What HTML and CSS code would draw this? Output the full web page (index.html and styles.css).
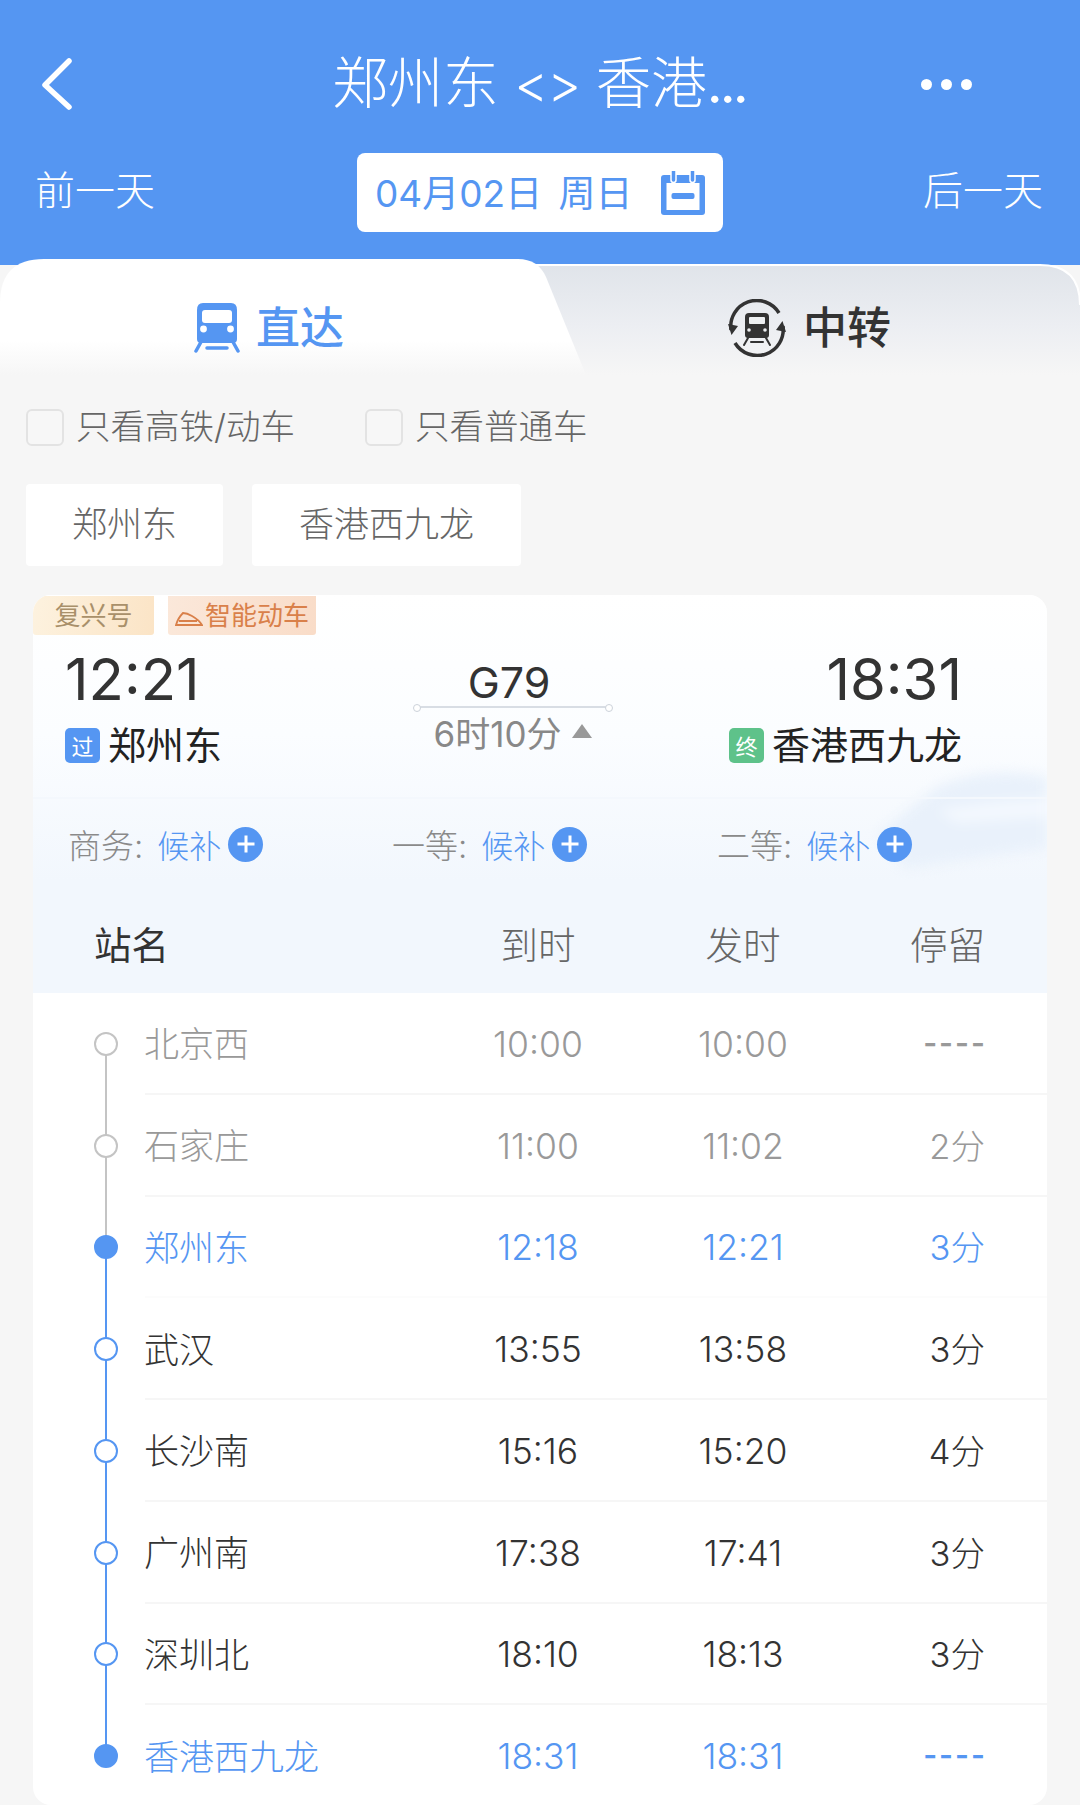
FILE: index.html
```html
<!DOCTYPE html>
<html lang="zh-CN">
<head>
<meta charset="utf-8">
<title>G79</title>
<link rel="stylesheet" href="styles.css">
</head>
<body>
<div class="page">
  <header class="header">
    <div class="nav">
      <svg class="back" viewBox="0 0 34 52"><path d="M29 3 L5 27 L29 49" /></svg>
      <div class="title">郑州东 <span class="arrows">&lt;&gt;</span> 香港<span class="ell">...</span></div>
      <div class="more"><i></i><i></i><i></i></div>
    </div>
    <div class="dates">
      <span class="day">前一天</span>
      <div class="date-pill">
        <span class="date-text">04月02日 周日</span>
        <svg class="cal" viewBox="0 0 44 44">
          <rect x="0" y="4" width="44" height="40" rx="3" class="b"/>
          <rect x="5.500" y="12" width="33" height="27" class="w"/>
          <path d="M10 0v9a2.500 2.500 0 0 0 5 0V0 M34 0v9a2.500 2.500 0 0 1-5 0V0" class="ring"/>
          <rect x="10.500" y="22" width="23" height="6" rx="2" class="b"/>
        </svg>
      </div>
      <span class="day">后一天</span>
    </div>
  </header>

  <div class="tabs">
    <svg class="tab-bg" viewBox="0 0 1080 116">
      <defs>
        <linearGradient id="tr" x1="0" y1="0" x2="0" y2="1">
          <stop offset="0" stop-color="#e0e4ea"/><stop offset=".55" stop-color="#eceef2"/><stop offset="1" stop-color="#f6f6f6"/>
        </linearGradient>
        <linearGradient id="tl" x1="0" y1="0" x2="0" y2="1">
          <stop offset="0" stop-color="#ffffff"/><stop offset=".7" stop-color="#ffffff"/><stop offset="1" stop-color="#f6f6f6"/>
        </linearGradient>
      </defs>
      <path d="M520 6H1040Q1080 6 1080 46V116H520Z" fill="url(#tr)"/>
      <path d="M520 6H1040Q1080 6 1080 46" fill="none" stroke="#fff" stroke-width="2"/>
      <path d="M0 116V44Q0 0 44 0H518Q538 0 546 18L586 116Z" fill="url(#tl)"/>
    </svg>
    <div class="tab tab-on">
      <svg class="ic-train" viewBox="0 0 46 50">
        <path d="M9 0H37Q43 0 43 7V36Q43 40 39 40H7Q3 40 3 36V7Q3 0 9 0Z" class="fb"/>
        <rect x="8" y="7" width="30" height="13" rx="3" fill="#fff"/>
        <circle cx="9.500" cy="26" r="3.400" fill="#fff"/><circle cx="36.500" cy="26" r="3.400" fill="#fff"/>
        <path d="M7 39L2 48M39 39L44 48M13 45H33" class="sb"/>
      </svg>
      <span>直达</span>
    </div>
    <div class="tab tab-off">
      <svg class="ic-transfer" viewBox="0 0 58 58">
        <path d="M3 31A26 26 0 0 1 51 14" class="sd"/>
        <path d="M55 27A26 26 0 0 1 7 44" class="sd"/>
        <path d="M0 25L3.500 36L10 27Z M58 33L54.500 22L48 31Z" fill="#333"/>
        <path d="M21 14H37Q41 14 41 18V36Q41 39 38 39H20Q17 39 17 36V18Q17 14 21 14Z" fill="#333"/>
        <rect x="21" y="18" width="16" height="7" rx="1" fill="#eef0f2"/>
        <circle cx="21" cy="31" r="1.800" fill="#eef0f2"/><circle cx="37" cy="31" r="1.800" fill="#eef0f2"/>
        <path d="M20 39L16 46M38 39L42 46M23 43H35" class="sd2"/>
      </svg>
      <span>中转</span>
    </div>
  </div>

  <div class="filters">
    <label class="check check-a"><i></i><span>只看高铁/动车</span></label>
    <label class="check"><i></i><span>只看普通车</span></label>
  </div>

  <div class="chips">
    <span class="chip chip-a">郑州东</span>
    <span class="chip chip-b">香港西九龙</span>
  </div>

  <section class="card">
    <div class="summary">
      <svg class="wave" viewBox="0 0 170 110">
        <path d="M0 70L60 22Q110 0 170 12V84Q110 90 30 104Z" fill="#e9f1fb"/>
        <path d="M60 45Q110 36 170 34V52Q120 56 80 58Z" fill="#f3f8fe"/>
      </svg>
      <div class="divider"></div>
      <div class="badges">
        <span class="badge badge-fx">复兴号</span>
        <span class="badge badge-zn">
          <svg class="ic-bullet" viewBox="0 0 28 14"><path d="M1 13H27Q24 8 17 4Q12 1 8 1Q3 6 1 13ZM4 9H22" /></svg>智能动车
        </span>
      </div>
      <div class="trip">
        <div class="end">
          <div class="time">12:21</div>
          <div class="st"><b class="tag tag-pass">过</b><span>郑州东</span></div>
        </div>
        <div class="mid">
          <div class="no">G79</div>
          <div class="rule"></div>
          <div class="dur"><span>6时10分</span><i class="tri"></i></div>
        </div>
        <div class="end end-r">
          <div class="time">18:31</div>
          <div class="st"><b class="tag tag-end">终</b><span>香港西九龙</span></div>
        </div>
      </div>
      <div class="seats">
        <div class="seat"><span class="k">商务:</span><span class="v">候补</span><i class="plus"></i></div>
        <div class="seat"><span class="k">一等:</span><span class="v">候补</span><i class="plus"></i></div>
        <div class="seat"><span class="k">二等:</span><span class="v">候补</span><i class="plus"></i></div>
      </div>
      <div class="thead">
        <span class="th-name">站名</span>
        <span class="c-a">到时</span>
        <span class="c-d">发时</span>
        <span class="c-s">停留</span>
      </div>
    </div>

    <div class="rows">
      <div class="row past"><div class="track"><i class="dot"></i></div><div class="cells"><span class="name">北京西</span><span class="c-a">10:00</span><span class="c-d">10:00</span><span class="c-s dash">----</span></div></div>
      <div class="row past"><div class="track"><i class="dot"></i></div><div class="cells"><span class="name">石家庄</span><span class="c-a">11:00</span><span class="c-d">11:02</span><span class="c-s">2分</span></div></div>
      <div class="row cur"><div class="track"><i class="dot"></i></div><div class="cells flat"><span class="name">郑州东</span><span class="c-a">12:18</span><span class="c-d">12:21</span><span class="c-s">3分</span></div></div>
      <div class="row"><div class="track"><i class="dot"></i></div><div class="cells"><span class="name">武汉</span><span class="c-a">13:55</span><span class="c-d">13:58</span><span class="c-s">3分</span></div></div>
      <div class="row"><div class="track"><i class="dot"></i></div><div class="cells"><span class="name">长沙南</span><span class="c-a">15:16</span><span class="c-d">15:20</span><span class="c-s">4分</span></div></div>
      <div class="row"><div class="track"><i class="dot"></i></div><div class="cells"><span class="name">广州南</span><span class="c-a">17:38</span><span class="c-d">17:41</span><span class="c-s">3分</span></div></div>
      <div class="row"><div class="track"><i class="dot"></i></div><div class="cells"><span class="name">深圳北</span><span class="c-a">18:10</span><span class="c-d">18:13</span><span class="c-s">3分</span></div></div>
      <div class="row cur last"><div class="track"><i class="dot"></i></div><div class="cells flat"><span class="name">香港西九龙</span><span class="c-a">18:31</span><span class="c-d">18:31</span><span class="c-s dash">----</span></div></div>
    </div>
  </section>
</div>
</body>
</html>
```
FILE: styles.css
```css
* { box-sizing: border-box; }
html, body { margin: 0; padding: 0; }
body {
  width: 1080px;
  height: 1805px;
  overflow: hidden;
  background: #f6f6f6;
  font-family: Inter, "Noto Sans CJK SC", sans-serif;
  color: #333;
}
i, b { font-style: normal; font-weight: 400; }

.page { width: 1080px; height: 1805px; overflow: hidden; }

/* header */
.header { background: #5596f2; height: 265px; color: #fff; }
.nav {
  height: 140px;
  padding: 28px 108px 0 40px;
  display: grid;
  grid-template-columns: 1fr auto 1fr;
  align-items: center;
}
.back { width: 34px; height: 52px; fill: none; stroke: #fff; stroke-width: 5.500; stroke-linecap: round; stroke-linejoin: round; }
.title { font-size: 55.500px; line-height: 70px; white-space: nowrap; font-weight: 300; margin-left: 66px; }
.arrows { font-size: 52px; letter-spacing: -1px; }
.ell { letter-spacing: -3px; font-weight: 400; }
.more { display: flex; gap: 9px; justify-self: end; }
.more i { width: 11px; height: 11px; border-radius: 50%; background: #fff; }

.dates {
  margin-top: 13px;
  height: 79px;
  padding: 0 37px 0 35px;
  display: flex;
  align-items: center;
  justify-content: space-between;
}
.day { font-size: 40px; line-height: 50px; font-weight: 300; margin-bottom: 4px; }
.date-pill {
  width: 366px;
  height: 79px;
  margin-left: 2px;
  background: #fff;
  border-radius: 8px;
  color: #5596f2;
  font-size: 37px;
  padding: 0 18px;
  display: flex;
  align-items: center;
  justify-content: space-between;
}
.date-text { word-spacing: 6px; margin-bottom: 4px; white-space: nowrap; }
.cal { width: 44px; height: 44px; }
.cal .b { fill: #5596f2; }
.cal .w { fill: #fff; }
.cal .ring { fill: #5596f2; stroke: #fff; stroke-width: 1.500; }

/* tabs */
.tabs {
  margin-top: -6px;
  height: 116px;
  position: relative;
  display: flex;
  padding-top: 21px;
}
.tab-bg { position: absolute; left: 0; top: 0; width: 1080px; height: 116px; }
.tab {
  position: relative;
  height: 90px;
  display: flex;
  align-items: center;
  font-size: 44px;
  font-weight: 500;
}
.tab-on { width: 580px; padding-left: 194px; color: #5596f2; gap: 16px; }
.tab-off { flex: 1; padding-left: 148px; color: #333; gap: 17px; }
.ic-train { width: 46px; height: 50px; margin-top: 6px; }
.fb { fill: #5596f2; }
.sb { fill: none; stroke: #5596f2; stroke-width: 3.500; stroke-linecap: round; }
.ic-transfer { width: 58px; height: 58px; margin-top: 6px; }
.sd { fill: none; stroke: #333; stroke-width: 3.500; }
.sd2 { fill: none; stroke: #333; stroke-width: 2; stroke-linecap: round; }

/* filters */
.filters {
  margin-top: 31px;
  padding-left: 26px;
  height: 42px;
  display: flex;
  align-items: center;
  color: #666;
  font-size: 34.500px;
}
.check { display: flex; align-items: center; gap: 12px; }
.check i {
  width: 38px;
  height: 37px;
  border: 2px solid #e3e3e3;
  border-radius: 6px;
  background: #f7f7f7;
}
.check span { line-height: 42px; font-weight: 300; }
.check-a { margin-right: 70px; }

/* chips */
.chips { margin-top: 36px; padding-left: 26px; display: flex; gap: 29px; }
.chip {
  height: 82px;
  padding-bottom: 7px;
  background: #fff;
  border-radius: 4px;
  font-size: 35px;
  font-weight: 300;
  color: #666;
  display: flex;
  align-items: center;
  justify-content: center;
}
.chip-a { width: 197px; }
.chip-b { width: 269px; }

/* card */
.card {
  margin: 29px 33px 0;
  height: 1210px;
  background: #fff;
  border-radius: 18px;
  overflow: hidden;
}
.summary {
  position: relative;
  height: 398px;
  padding-top: 1px;
  background: linear-gradient(180deg, #ffffff 0%, #fbfdff 35%, #f2f7fd 72%, #f2f7fd 100%);
}
.wave { position: absolute; right: 0; top: 170px; width: 170px; height: 110px; filter: blur(6px); }
.divider { position: absolute; left: 0; right: 0; top: 202px; height: 2px; background: #f4f8fd; }
.badges { position: relative; display: flex; gap: 14px; }
.badge {
  height: 39px;
  padding-bottom: 5px;
  font-size: 26px;
  display: flex;
  align-items: center;
  border-radius: 0 0 3px 3px;
}
.badge-fx {
  width: 121px;
  justify-content: center;
  color: #a9906a;
  background: linear-gradient(100deg, #fdf2df, #fbe4c6);
}
.badge-zn {
  width: 148px;
  padding-left: 7px;
  gap: 2px;
  color: #d9804a;
  background: linear-gradient(100deg, #fbe8da, #f9dcc8);
}
.ic-bullet { width: 28px; height: 14px; margin-top: 12px; fill: none; stroke: #d9804a; stroke-width: 1.800; }

.trip {
  position: relative;
  margin-top: 16px;
  padding: 0 85px 0 32px;
  display: grid;
  grid-template-columns: 1fr 200px 1fr;
  height: 114px;
}
.end { display: flex; flex-direction: column; }
.end-r { align-items: flex-end; }
.time { font-size: 58px; line-height: 56px; color: #333; }
.st { margin-top: 18px; height: 40px; display: flex; align-items: center; gap: 8px; font-size: 38px; color: #222; }
.st span { margin-bottom: 5px; }
.tag {
  width: 35px;
  height: 35px;
  border-radius: 5px;
  color: #fff;
  font-size: 22px;
  display: flex;
  align-items: center;
  justify-content: center;
}
.tag-pass { background: #5596f2; }
.tag-end { background: #5ec28a; }

.mid { display: flex; flex-direction: column; align-items: center; margin-left: -2px; }
.no { font-size: 43px; line-height: 50px; margin: 6px 7px 0 0; color: #333; }
.rule { width: 198px; height: 2px; margin-top: -1px; background: #d8dde4; position: relative; }
.rule::before, .rule::after {
  content: "";
  position: absolute;
  top: -2px;
  width: 6px;
  height: 6px;
  border-radius: 50%;
  background: #fff;
  border: 1px solid #ccd2da;
}
.rule::before { left: -1px; }
.rule::after { right: -1px; }
.dur { margin-top: 3px; display: flex; align-items: center; gap: 10px; font-size: 35px; line-height: 46px; color: #888; white-space: nowrap; }
.tri { width: 0; height: 0; border-left: 10px solid transparent; border-right: 10px solid transparent; border-bottom: 14px solid #999; margin-top: -6px; }

.seats {
  position: relative;
  margin-top: 54px;
  height: 50px;
  padding-left: 35px;
  display: grid;
  grid-template-columns: 324px 325px 1fr;
  align-items: center;
}
.seat { display: flex; align-items: center; font-size: 32px; }
.k { color: #8a8a8a; font-weight: 300; font-size: 33px; margin-right: 14px; }
.v { color: #5596f2; font-weight: 300; }
.plus { width: 35px; height: 35px; margin-left: 7px; border-radius: 50%; background: #5596f2; position: relative; }
.plus::before, .plus::after { content: ""; position: absolute; background: #fff; left: 50%; top: 50%; transform: translate(-50%, -50%); }
.plus::before { width: 17px; height: 3px; }
.plus::after { width: 3px; height: 17px; }

.thead, .cells {
  display: grid;
  grid-template-columns: 295px 196px 214px 135px;
  align-items: center;
}
.thead {
  position: relative;
  margin-top: 25px;
  height: 96px;
  padding-left: 112px;
  font-size: 37.500px;
  font-weight: 300;
  color: #666;
}
.th-name { margin-left: -51px; color: #333; font-weight: 400; }

.c-a, .c-d { text-align: center; }
.c-s { text-align: right; }

/* rows */
.row { display: flex; height: 101.750px; }
.track { width: 112px; flex: none; position: relative; }
.track::before {
  content: "";
  position: absolute;
  left: 72px;
  top: 50%;
  width: 2px;
  height: 100%;
  background: #5596f2;
}
.past .track::before { background: #c4c4c4; }
.last .track::before { display: none; }
.dot {
  position: absolute;
  left: 61px;
  top: 50%;
  width: 24px;
  height: 24px;
  margin-top: -12px;
  border-radius: 50%;
  background: #fff;
  border: 2.500px solid #5596f2;
  z-index: 1;
}
.past .dot { border-color: #c4c4c4; }
.cur .dot { background: #5596f2; }

.cells {
  flex: 1;
  font-size: 35.500px;
  font-weight: 350;
  color: #333;
  border-bottom: 2px solid #f6f6f6;
  height: 100%;
}
.cells .c-a, .cells .c-d { padding-top: 3px; }
.cells .c-s { font-size: 34.500px; margin-top: -2px; font-weight: 300; }
.cells.flat { border-bottom-color: #fcfcfc; }
.name { font-size: 35px; font-weight: 300; margin: -2px 0 0 -1px; }
.past .cells { color: #999; }
.cur .cells { color: #5596f2; }
.cells .c-s.dash { font-size: 30px; letter-spacing: 2px; margin: 0 -2px 0 0; font-weight: 600; }
```
